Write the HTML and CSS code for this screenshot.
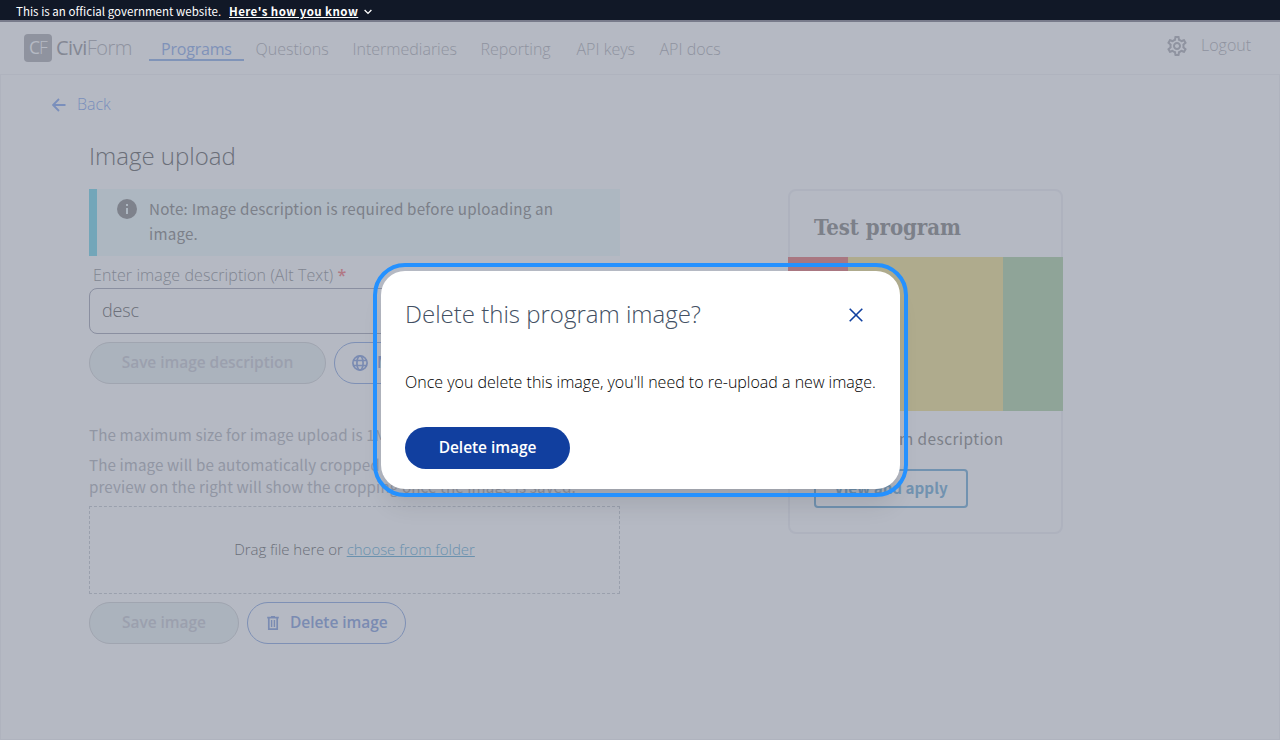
FILE: index.html
```html
<!DOCTYPE html>
<html lang="en">
<head>
<meta charset="utf-8">
<title>Image upload</title>
<link rel="stylesheet" href="styles.css">
</head>
<body>
<div class="banner">
  <span class="banner-text">This is an official government website.</span>
  <a class="banner-link">Here's how you know</a>
  <svg class="banner-caret" viewBox="0 0 8 6"><path d="M.6 1l3.4 3.4L7.4 1" fill="none" stroke="currentColor" stroke-width="1.3"/></svg>
</div>
<header class="header">
  <div class="logo"><span class="logo-mark"><b>C</b>F</span><span class="logo-name"><b>Civi</b>Form</span></div>
  <nav class="nav">
    <a class="nav-item nav-programs active">Programs</a>
    <a class="nav-item nav-questions">Questions</a>
    <a class="nav-item nav-intermediaries">Intermediaries</a>
    <a class="nav-item nav-reporting">Reporting</a>
    <a class="nav-item nav-keys">API keys</a>
    <a class="nav-item nav-docs">API docs</a>
  </nav>
  <div class="account">
    <svg class="gear" viewBox="0 0 24 24" fill="currentColor"><path d="M19.43 12.98c.04-.32.07-.64.07-.98 0-.34-.03-.66-.07-.98l2.11-1.65c.19-.15.24-.42.12-.64l-2-3.46c-.09-.16-.26-.25-.44-.25-.06 0-.12.01-.17.03l-2.49 1c-.52-.4-1.08-.73-1.69-.98l-.38-2.65C14.46 2.18 14.25 2 14 2h-4c-.25 0-.46.18-.49.42l-.38 2.65c-.61.25-1.17.59-1.69.98l-2.49-1c-.06-.02-.12-.03-.18-.03-.17 0-.34.09-.43.25l-2 3.46c-.13.22-.07.49.12.64l2.11 1.65c-.04.32-.07.65-.07.98 0 .33.03.66.07.98l-2.11 1.65c-.19.15-.24.42-.12.64l2 3.46c.09.16.26.25.44.25.06 0 .12-.01.17-.03l2.49-1c.52.4 1.08.73 1.69.98l.38 2.65c.03.24.24.42.49.42h4c.25 0 .46-.18.49-.42l.38-2.65c.61-.25 1.17-.59 1.69-.98l2.49 1c.06.02.12.03.18.03.17 0 .34-.09.43-.25l2-3.46c.12-.22.07-.49-.12-.64l-2.11-1.65zm-1.98-1.71c.04.31.05.52.05.73 0 .21-.02.43-.05.73l-.14 1.13.89.7 1.08.84-.7 1.21-1.27-.51-1.04-.42-.9.68c-.43.32-.84.56-1.25.73l-1.06.43-.16 1.13-.2 1.35h-1.4l-.19-1.35-.16-1.13-1.06-.43c-.43-.18-.83-.41-1.23-.71l-.91-.7-1.06.43-1.27.51-.7-1.21 1.08-.84.89-.7-.14-1.13c-.03-.31-.05-.54-.05-.74s.02-.43.05-.73l.14-1.13-.89-.7-1.08-.84.7-1.21 1.27.51 1.04.42.9-.68c.43-.32.84-.56 1.25-.73l1.06-.43.16-1.13.2-1.35h1.39l.19 1.35.16 1.13 1.06.43c.43.18.83.41 1.23.71l.91.7 1.06-.43 1.27-.51.7 1.21-1.07.85-.89.7.14 1.13zM12 8c-2.21 0-4 1.79-4 4s1.79 4 4 4 4-1.79 4-4-1.79-4-4-4zm0 6c-1.1 0-2-.9-2-2s.9-2 2-2 2 .9 2 2-.9 2-2 2z"/></svg>
    <a class="logout">Logout</a>
  </div>
</header>
<main class="main">
  <a class="back"><svg class="back-icon" viewBox="0 0 14 14"><path d="M13.5 7H1.5M7 1L1 7l6 6" fill="none" stroke="currentColor" stroke-width="1.8"/></svg><span>Back</span></a>
  <div class="columns">
    <section class="form">
      <h1 class="title">Image upload</h1>
      <div class="alert">
        <svg class="info" viewBox="0 0 20 20"><circle cx="10" cy="10" r="10" fill="currentColor"/><path d="M9 5h2v2H9zM9 9h2v6H9z" fill="#adb7c1"/></svg>
        <p class="alert-text">Note: Image description is required before uploading an image.</p>
      </div>
      <label class="label">Enter image description (Alt Text) <span class="required">*</span></label>
      <div class="input">desc</div>
      <div class="actions">
        <button class="btn disabled save-desc">Save image description</button>
        <button class="btn outline translate"><svg class="globe" viewBox="0 0 16 16" fill="none" stroke="currentColor" stroke-width="1.7"><circle cx="8" cy="8" r="7.1"/><ellipse cx="8" cy="8" rx="3.1" ry="7.1"/><path d="M1.4 5.5h13.2M1.4 10.5h13.2"/></svg><span>Manage translations</span></button>
      </div>
      <p class="hint hint-size">The maximum size for image upload is 1MB.</p>
      <p class="hint hint-crop">The image will be automatically cropped to 16:9. The program card<br>preview on the right will show the cropping once the image is saved.</p>
      <div class="dropzone"><span class="drop-text">Drag file here or <a class="choose">choose from folder</a></span></div>
      <div class="actions">
        <button class="btn disabled save-image">Save image</button>
        <button class="btn outline delete"><svg class="trash" viewBox="0 0 12 14" fill="none" stroke="currentColor"><path d="M.2 1.6h11.6" stroke-width="1.7"/><path d="M4 .6h4" stroke-width="1.2"/><path d="M1.8 2v11.1h8.4V2" stroke-width="1.7"/><path d="M4.6 4v7M7.4 4v7" stroke-width="1.4"/></svg><span>Delete image</span></button>
      </div>
    </section>
    <article class="card">
      <h2 class="card-title">Test program</h2>
      <div class="card-image"><i class="stripe red"></i><i class="stripe yellow"></i><i class="stripe green"></i></div>
      <p class="card-text">Test program description</p>
      <button class="apply">View and apply</button>
    </article>
  </div>
</main>
<div class="modal" role="dialog">
  <div class="modal-head">
    <h2 class="modal-title">Delete this program image?</h2>
    <svg class="close" viewBox="0 0 14 14"><path d="M.7.7l12.6 12.6M13.3.7L.7 13.3" fill="none" stroke="currentColor" stroke-width="1.6"/></svg>
  </div>
  <p class="modal-text">Once you delete this image, you'll need to re-upload a new image.</p>
  <button class="btn primary">Delete image</button>
</div>
</body>
</html>
```
FILE: styles.css
```css
* { box-sizing: border-box; }
body, h1, h2, p { margin: 0; }
body {
  height: 740px;
  display: flex;
  flex-direction: column;
  overflow: hidden;
  background: #b5b9c3;
  font: 300 16px/24px "Open Sans", "Noto Sans", sans-serif;
  white-space: nowrap;
}
h1, h2 { font-weight: 300; }
button { font: inherit; padding: 0; margin: 0; }
svg { display: block; flex: none; }

.banner {
  height: 22px;
  flex: none;
  display: flex;
  align-items: center;
  padding-left: 16px;
  background: #111827;
  border-bottom: 2px solid #787b8b;
  color: #fff;
  font: 400 11.5px/20px "Noto Sans CJK SC", sans-serif;
}
.banner-text { width: 213px; padding-top: 2px; letter-spacing: 0.03px; }
.banner-link { padding-top: 2px; font-weight: 700; text-decoration: underline; letter-spacing: 0.45px; }
.banner-caret { width: 8px; height: 6px; margin: 4px 0 0 6px; }

.header { height: 52px; flex: none; display: flex; padding-left: 24px; color: #8f93a0; }
.logo { width: 125px; display: flex; padding-top: 12px; }
.logo-mark {
  width: 28px;
  height: 28px;
  border-radius: 4px;
  background: #8f939f;
  color: #b5b9c3;
  font-size: 17.5px;
  line-height: 27px;
  letter-spacing: -1px;
  text-align: center;
}
.logo b { font-weight: 400; }
.logo-name { margin-left: 4px; font-size: 20px; line-height: 27px; letter-spacing: -0.5px; }
.logo-name b { color: #848894; }
.nav { display: flex; padding-top: 14px; flex: 1; }
.nav-item { height: 25px; padding: 1px 12px 0; }
.nav-programs { width: 94.5px; }
.nav-questions { width: 97px; }
.nav-intermediaries { width: 128px; }
.nav-reporting { width: 96px; }
.nav-keys { width: 83px; }
.active { color: #7f92b9; border-bottom: 2px solid #8094b8; font-weight: 400; letter-spacing: -0.2px; }
.account { display: flex; width: 115px; padding-top: 11px; }
.gear { width: 24px; height: 24px; margin-top: 1px; }
.logout { margin-left: 12px; }

.main { flex: 1; border: 1px solid #afb3be; padding: 17px 0 0 51px; }
.back { display: flex; align-items: center; color: #7a8fbc; }
.back-icon { width: 14px; height: 14px; margin-right: 11px; margin-top: 2px; }
.columns { display: flex; padding: 22px 0 0 37px; align-items: flex-start; }
.form { width: 531px; }
.title { font-size: 24px; line-height: 36px; color: #6b6f79; }
.alert {
  margin-top: 15px;
  height: 67px;
  display: flex;
  padding: 7px 20px 0;
  border-left: 8px solid #73a6b9;
  background: #adb7c1;
}
.info { width: 20px; height: 20px; margin-top: 3px; color: #7e828c; }
.alert-text {
  width: 430px;
  margin-left: 12px;
  white-space: normal;
  color: #7c8089;
  font: 400 15.2px/25px "Noto Sans CJK SC", sans-serif;
  letter-spacing: 0.2px;
}
.label { display: block; margin-top: 8px; padding-left: 4px; line-height: 22px; color: #80859a; color: #808591; letter-spacing: 0.1px; }
.required { color: #b17884; font-weight: 600; letter-spacing: 0; }
.input {
  height: 46px;
  margin-top: 2px;
  padding-left: 12px;
  border: 1px solid #8a8fa0;
  border-radius: 8px;
  color: #6b6f79;
  font-size: 18px;
  line-height: 42px;
  letter-spacing: -0.2px;
}
.actions { display: flex; gap: 8px; margin-top: 8px; }
.btn {
  height: 42px;
  display: flex;
  align-items: center;
  justify-content: center;
  padding-bottom: 2px;
  border-radius: 21px;
  font-size: 15.5px;
  font-weight: 600;
  line-height: 38px;
  letter-spacing: -0.05px;
}
.disabled { background: #abb3bd; border: 1px solid #a0a5b0; color: #9ba0ae; }
.outline { background: none; border: 1px solid #7e90b5; color: #7a8bb2; justify-content: flex-start; padding-left: 17px; }
.save-desc { width: 237px; }
.translate { width: 224px; }
.globe { width: 16px; height: 16px; margin-right: 9px; margin-top: 2px; }
.save-image { width: 150px; }
.delete { width: 159px; }
.trash { width: 12px; height: 14px; margin: 1px 11px 0 2px; }
.hint { color: #9196a3; font: 400 15.2px/22px "Noto Sans CJK SC", sans-serif; letter-spacing: 0.1px; }
.hint-size { margin-top: 39px; }
.hint-crop { margin-top: 8px; }
.dropzone {
  height: 88px;
  margin-top: 9px;
  display: flex;
  align-items: center;
  justify-content: center;
  padding-bottom: 2px;
  border: 1px dashed #9aa0ad;
  color: #6a6e78;
  font-size: 15px;
  letter-spacing: -0.03px;
}
.choose { color: #6a91ae; text-decoration: underline; }

.card {
  width: 275px;
  height: 345px;
  margin: 51px 0 0 168px;
  border: 2px solid #aeb2be;
  border-radius: 8px;
}
.card-title { padding: 20px 0 0 24px; color: #7c8089; font: 700 22px/32px "DejaVu Serif Condensed", "DejaVu Serif", serif; letter-spacing: -0.05px; }
.card-image { display: flex; height: 154px; margin: 14px -2px 0; }
.red { width: 60px; background: #a97781; }
.yellow { width: 155px; background: #afab8d; }
.green { width: 60px; background: #8fa498; }
.card-text { margin: 15px 0 0 24px; color: #7c8089; font: 400 15.4px/24px "Noto Sans CJK SC", sans-serif; letter-spacing: 0.43px; }
.apply {
  display: block;
  width: 154px;
  height: 39px;
  margin: 19px 0 0 24px;
  padding-bottom: 2px;
  border: 2px solid #7192b0;
  border-radius: 4px;
  background: none;
  color: #7192b0;
  font: 700 15.2px/33px "Noto Sans CJK SC", sans-serif;
}

.modal {
  position: absolute;
  left: 381px;
  top: 271px;
  width: 519px;
  height: 218px;
  padding: 24px;
  border-radius: 24px;
  background: #fff;
  outline: 4px solid #2491ff;
  outline-offset: 4px;
  box-shadow: 0 20px 25px -5px rgba(0, 0, 0, 0.1), 0 10px 10px -5px rgba(0, 0, 0, 0.04);
}
.modal-head { display: flex; justify-content: space-between; align-items: center; height: 40px; padding-right: 13px; }
.modal-title { font-size: 24px; line-height: 38px; padding-bottom: 2px; color: #435063; }
.close { width: 14px; height: 14px; color: #1040a0; }
.modal-text { margin-top: 35px; color: #000; }
.primary { width: 165px; margin-top: 33px; border: 0; background: #113f9f; color: #fff; }
```
